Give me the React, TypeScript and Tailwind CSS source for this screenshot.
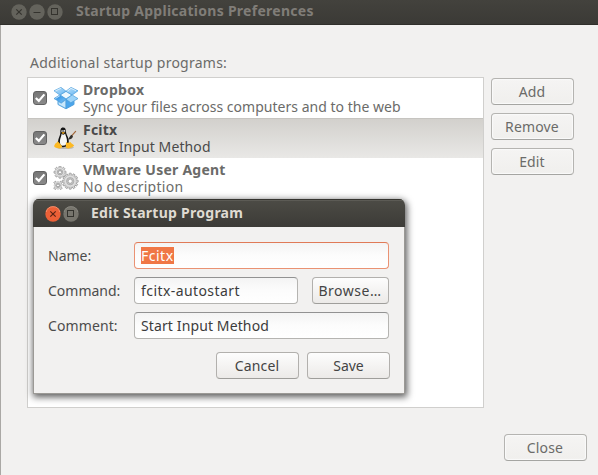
import type { ReactNode } from "react";

const FONT = "font-['Noto_Sans','Open_Sans',sans-serif]";

function DropboxIcon() {
  return (
    <svg width="26" height="24" viewBox="0 0 26 24">
      <defs>
        <linearGradient id="lid" x1="0" y1="0" x2="1" y2="1">
          <stop offset="0" stopColor="#c2e3fa" />
          <stop offset="1" stopColor="#64b5f2" />
        </linearGradient>
        <linearGradient id="side" x1="0" y1="0" x2="1" y2="1">
          <stop offset="0" stopColor="#1f87e0" />
          <stop offset="1" stopColor="#7cc3f7" />
        </linearGradient>
      </defs>
      <g stroke="#4c9ddb" strokeWidth="0.7" strokeLinejoin="round">
        <path d="M5 14 L13 9.5 L21 14 V18.5 L13 22.8 L5 18.5 Z" fill="#8ccaf6" />
        <path d="M7.2 8.9 L13 5.4 L18.8 8.9 L13 13 Z" fill="#eef8fe" />
        <path d="M8 1.4 L13 5.2 L6.8 9 L1 4.8 Z" fill="url(#lid)" />
        <path d="M18 1.4 L25 4.8 L19.2 9 L13 5.2 Z" fill="url(#lid)" />
        <path d="M6.8 9 L13 13.2 L8.2 16.8 L1 12.6 Z" fill="url(#side)" />
        <path d="M19.2 9 L25 12.6 L17.8 16.8 L13 13.2 Z" fill="#9ed4f9" />
        <path d="M5.2 15.4 L8.2 17.2 L13 13.6 V22.6 L5.2 18.4 Z" fill="#c9e7fb" />
        <path d="M20.8 15.4 L17.8 17.2 L13 13.6 V22.6 L20.8 18.4 Z" fill="#4aa5ec" />
      </g>
      <path d="M2.4 4.9 L8 2.3 M14.4 5.2 L18 2.3 L23 4.8 M2.4 12.5 L6.8 9.8" stroke="#e6f5fe" strokeWidth="0.8" fill="none" />
    </svg>
  );
}

function PenguinIcon() {
  return (
    <svg width="26" height="24" viewBox="0 0 26 24">
      <ellipse cx="12" cy="21.6" rx="9" ry="1.5" fill="#bdb9b3" />
      <path d="M10 1.6 C12.4 1.6 13 3.7 13 6 C13.2 8.8 16 11.6 15.8 15.8 C15.7 19.8 13.2 21.2 10 21.2 C7 21.2 4.8 19.6 5 15.8 C5.2 12 7.3 9.6 7.4 6.4 C7.3 3.8 7.7 1.6 10 1.6 Z" fill="#141414" />
      <path d="M8.6 7.8 C10 9.1 11.2 8.7 12.2 7.8 C12.6 10.2 14.2 12.4 14 15.6 C13.8 18.8 12 19.7 10 19.7 C7.8 19.7 6.8 18.2 6.9 15.4 C7 12.6 8.4 10.4 8.6 7.8 Z" fill="#f6f6f4" />
      <circle cx="9.1" cy="5.1" r="0.9" fill="#fff" />
      <circle cx="11.3" cy="5.1" r="1" fill="#fff" />
      <circle cx="9.3" cy="5.2" r="0.4" fill="#111" />
      <circle cx="11.2" cy="5.2" r="0.4" fill="#111" />
      <path d="M8.4 6.7 L10 6 L12.2 6.7 L10 8.1 Z" fill="#f3a81c" />
      <path d="M4.8 15.2 C6 16.6 7.6 18.4 9 20 C9.2 22 7.4 22.8 5.6 22.2 C4 21.8 1.8 21.6 1.2 20.4 C1.2 19.2 2 18.4 2.6 17.2 C3.6 17 4 15.8 4.8 15.2 Z" fill="#fdb923" />
      <path d="M13 16.2 C15 17 16.2 16.8 17.4 16 C18 17.6 20 18.2 21.2 19.4 C20 20.9 18 21.4 16.4 22.2 C14.4 22.8 12.8 22 12.8 20.4 Z" fill="#fdb923" />
      <path d="M22.6 5.4 L18.6 9.8" stroke="#a2673a" strokeWidth="1.2" strokeLinecap="round" />
      <path d="M18.5 8.8 L20 10.2 C19.4 12.8 17 13.8 14.8 13.4 C16.4 12.4 16.6 9.6 18.5 8.8 Z" fill="#34302d" />
    </svg>
  );
}

function Gear({ cx, cy, r, teeth, size, turn = 0 }: { cx: number; cy: number; r: number; teeth: number; size: number; turn?: number }) {
  return (
    <g transform={`translate(${cx} ${cy}) rotate(${turn})`}>
      {Array.from({ length: teeth }, (_, i) => (
        <rect key={i} x={-size / 2} y={-r} width={size} height={r * 0.5} rx="0.5" fill="#dadada" stroke="#888" strokeWidth="0.7" transform={`rotate(${(i * 360) / teeth})`} />
      ))}
      <circle r={r * 0.76} fill="#dedede" stroke="#b5b5b5" strokeWidth="0.4" />
      <circle r={r * 0.46} fill="#c9c9c9" stroke="#999" strokeWidth="0.6" />
      <circle r={r * 0.26} fill="#fff" stroke="#858585" strokeWidth="0.6" />
    </g>
  );
}

function GearsIcon() {
  return (
    <svg width="26" height="24" viewBox="0 0 26 24">
      <Gear cx={7} cy={6.2} r={6} teeth={8} size={2.2} />
      <Gear cx={5} cy={19.4} r={5} teeth={4} size={2.2} turn={45} />
      <Gear cx={17.2} cy={15.2} r={8} teeth={12} size={2.2} />
    </svg>
  );
}

function Check() {
  return (
    <span className="flex size-[14px] shrink-0 items-center justify-center rounded-[3px] border border-[#616161] bg-linear-to-b from-[#777] to-[#8a8a8a]">
      <svg width="12" height="12" viewBox="0 0 12 12" className="shrink-0">
        <path d="M1.8 6 L4.8 8.9 L10.4 2.4" fill="none" stroke="#fff" strokeWidth="2.2" />
      </svg>
    </span>
  );
}

function WinButton({ kind, active = false }: { kind: "close" | "min" | "max"; active?: boolean }) {
  const fill = active && kind === "close" ? "#ec6037" : active ? "#77756d" : "#64635c";
  const line = active && kind === "close" ? "#5a2415" : "#34332e";
  return (
    <svg width="16" height="16" viewBox="0 0 16 16">
      <circle cx="8" cy="8" r="7.7" fill={fill} />
      {active && <path d="M1.2 6 A7 7 0 0 1 14.8 6" stroke={kind === "close" ? "#f79a78" : "#8d8b84"} strokeWidth="0.8" fill="none" />}
      {kind === "close" && <path d="M5.3 5.3 L10.7 10.7 M10.7 5.3 L5.3 10.7" stroke={line} strokeWidth="1.2" />}
      {kind === "min" && <path d="M4.5 8.5 H11.5" stroke={line} strokeWidth="1" />}
      {kind === "max" && <rect x="5.5" y="5.5" width="6" height="6" transform="translate(-1 -1)" fill="none" stroke={line} strokeWidth="1" />}
    </svg>
  );
}

type RowProps = { icon: ReactNode; title: string; titleClass: string; text: string; textClass: string; selected?: boolean };

function Row({ icon, title, titleClass, text, textClass, selected = false }: RowProps) {
  return (
    <div className={`flex h-10 items-center pl-[5px] ${selected ? "bg-linear-to-b from-[#d2d0cc] to-[#e9e8e6] text-[#4a4a4a] shadow-[inset_0_1px_0_#c6c4c0]" : "text-[#6b6b69]"}`}>
      <Check />
      <span className="ml-[6px] flex">{icon}</span>
      <div className="ml-1 flex flex-col leading-[17px]">
        <span className={`font-bold ${titleClass}`}>{title}</span>
        <span className={textClass}>{text}</span>
      </div>
    </div>
  );
}

function SideButton({ children }: { children: ReactNode }) {
  return (
    <button className="flex h-[27px] w-[83px] items-center justify-center rounded-[4px] border border-[#b5b4b1] border-b-[#a5a5a2] bg-linear-to-b from-[#f5f4f3] to-[#f0efed] pr-px tracking-[0.15px] text-[#6b6b69] shadow-[inset_0_0_1px_1px_#fafafa]">
      {children}
    </button>
  );
}

function DialogButton({ children, className }: { children: ReactNode; className: string }) {
  return (
    <button className={`flex h-[27px] items-center justify-center rounded-[4px] border border-[#b2b0ad] border-b-[#9f9e9b] bg-linear-to-b from-[#fdfdfd] to-[#eceae8] text-[#444] ${className}`}>
      {children}
    </button>
  );
}

function Field({ children, className }: { children: ReactNode; className: string }) {
  return (
    <div className={`flex h-[27px] items-center rounded-[4px] border bg-linear-to-b from-[#f4f4f4] via-[#fcfcfc] to-white pl-[6px] text-[#3c3c3c] ${className}`}>
      {children}
    </div>
  );
}

export default function App() {
  return (
    <div className={`relative flex h-[475px] w-[598px] flex-col overflow-hidden bg-[#f2f1f0] text-[14px] whitespace-nowrap ${FONT}`}>
      <header className="flex h-[25px] shrink-0 items-center gap-[2px] border-b border-[#302f2b] bg-linear-to-b from-[#43423d] to-[#3b3a36] pl-[11px] text-[#807d78]">
        <WinButton kind="close" />
        <WinButton kind="min" />
        <WinButton kind="max" />
        <h1 className="-mt-[3px] ml-[11px] font-bold tracking-[0.27px]">Startup Applications Preferences</h1>
      </header>
      <main className="flex grow flex-col border-l border-[#aaa8a5] pl-[26px]">
        <p className="mt-[28px] ml-[3px] h-6 leading-[19px] tracking-[0.25px] text-[#6b6b69]">Additional startup programs:</p>
        <div className="flex gap-[7px]">
          <div className="h-[331px] w-[457px] border border-[#d0cfcd] bg-white">
            <Row icon={<DropboxIcon />} title="Dropbox" titleClass="tracking-[0.3px]" text="Sync your files across computers and to the web" textClass="tracking-[0.02px]" />
            <Row selected icon={<PenguinIcon />} title="Fcitx" titleClass="tracking-[0.2px]" text="Start Input Method" textClass="tracking-[0.1px]" />
            <Row icon={<GearsIcon />} title="VMware User Agent" titleClass="tracking-[0.24px]" text="No description" textClass="tracking-[0.28px]" />
          </div>
          <div className="mt-px flex flex-col gap-2">
            <SideButton>Add</SideButton>
            <SideButton>Remove</SideButton>
            <SideButton>Edit</SideButton>
          </div>
        </div>
        <div className="mt-[26px] flex justify-end pr-[11px]"><SideButton>Close</SideButton></div>
      </main>

      <section className="absolute top-[199px] left-[33px] flex h-[195px] w-[372px] flex-col overflow-hidden rounded-t-[6px] bg-[#f2f1f0] text-[#4c4c4c] shadow-[1px_2px_7px_1px_rgba(0,0,0,0.65)]">
        <header className="flex h-7 shrink-0 items-center gap-[2px] bg-linear-to-b from-[#4d4c46] to-[#3c3b37] pt-px pl-[12px] text-[#dfdbd2] shadow-[inset_0_1px_0_#35342f,inset_0_2px_0_#5c5b55]">
          <WinButton kind="close" active />
          <WinButton kind="max" active />
          <h2 className="-mt-[3px] ml-[10px] font-bold tracking-[0.26px]">Edit Startup Program</h2>
        </header>
        <div className="flex grow flex-col border border-t-0 border-[#9b9995]">
          <div className="flex flex-col gap-2 pt-[15px] pl-[14px]">
            <div className="flex items-center">
              <span className="w-[86px]">Name:</span>
              <Field className="w-[255px] border-[#ea9273] border-t-[#e07a57]"><span className="bg-[#f07746] leading-[17px] tracking-[0.5px] text-white">Fcitx</span></Field>
            </div>
            <div className="flex items-center">
              <span className="w-[86px]">Command:</span>
              <Field className="w-[164px] border-[#b5b4b1] border-t-[#929292] tracking-[0.42px]">fcitx-autostart</Field>
              <span className="w-[14px]" />
              <DialogButton className="w-[77px] pr-px tracking-[0.5px]">Browse…</DialogButton>
            </div>
            <div className="flex items-center">
              <span className="w-[86px] tracking-[0.1px]">Comment:</span>
              <Field className="w-[255px] border-[#b5b4b1] border-t-[#929292] tracking-[0.12px]">Start Input Method</Field>
            </div>
          </div>
          <div className="mt-[13px] flex justify-end gap-2 pr-[14px]">
            <DialogButton className="w-[83px] pr-px tracking-[0.15px]">Cancel</DialogButton>
            <DialogButton className="w-[83px]">Save</DialogButton>
          </div>
        </div>
      </section>
    </div>
  );
}
